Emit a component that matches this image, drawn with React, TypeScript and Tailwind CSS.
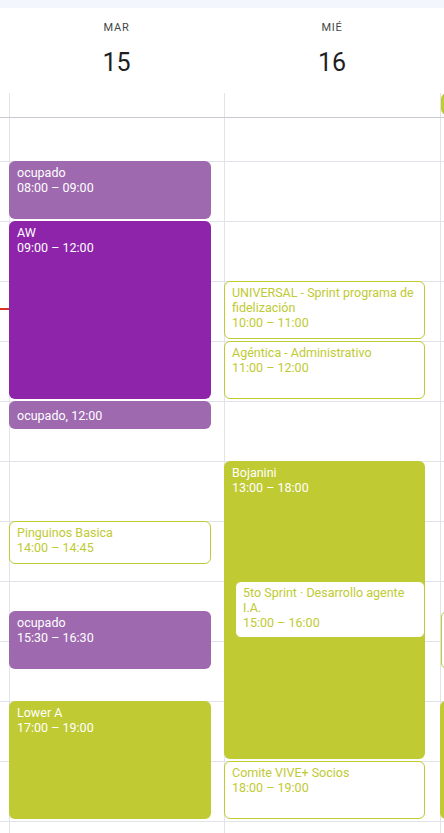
import React from "react";

type Ev = {
  top: number;
  height: number;
  left: number;
  width: number;
  kind: "grape" | "lav" | "green" | "outline";
  title: string;
  time?: string;
  inline?: boolean;
  z?: number;
};

const LINE = "border-[#e1e3ea]";

function HourLines() {
  return (
    <>
      <div className={`h-[44px] border-b ${LINE}`} />
      {Array.from({ length: 12 }).map((_, i) => (
        <div key={i} className={`h-[60px] border-b ${LINE}`} />
      ))}
    </>
  );
}

function Event({ e }: { e: Ev }) {
  const base =
    "absolute overflow-hidden rounded-[6px] text-[12.5px] leading-[15px]";
  let cls = "";
  if (e.kind === "grape") cls = "bg-[#8e24aa] text-white pl-[8px] pr-[4px] pt-[4px]";
  if (e.kind === "lav") cls = "bg-[#9e69af] text-white pl-[8px] pr-[4px] pt-[4px]";
  if (e.kind === "green") cls = "bg-[#c0ca33] text-white pl-[8px] pr-[4px] pt-[4px]";
  if (e.kind === "outline")
    cls = "bg-white border border-[#c0ca33] text-[#c0ca33] pl-[7px] pr-[3px] pt-[3px]";
  return (
    <div
      className={`${base} ${cls}`}
      style={{ top: e.top, height: e.height, left: e.left, width: e.width, zIndex: e.z ?? 1 }}
    >
      {e.inline ? (
        <div className="pt-[3px]">
          {e.title}, {e.time}
        </div>
      ) : (
        <>
          <div>{e.title}</div>
          {e.time && <div>{e.time}</div>}
        </>
      )}
    </div>
  );
}

const col1: Ev[] = [
  { top: 43, height: 58, left: -1, width: 202, kind: "lav", title: "ocupado", time: "08:00 – 09:00" },
  { top: 103, height: 178, left: -1, width: 202, kind: "grape", title: "AW", time: "09:00 – 12:00" },
  { top: 283, height: 28, left: -1, width: 202, kind: "lav", title: "ocupado", time: "12:00", inline: true },
  { top: 403, height: 43, left: -1, width: 202, kind: "outline", title: "Pinguinos Basica", time: "14:00 – 14:45" },
  { top: 493, height: 58, left: -1, width: 202, kind: "lav", title: "ocupado", time: "15:30 – 16:30" },
  { top: 583, height: 118, left: -1, width: 202, kind: "green", title: "Lower A", time: "17:00 – 19:00" },
];

const col2: Ev[] = [
  {
    top: 163,
    height: 58,
    left: -1,
    width: 201,
    kind: "outline",
    title: "UNIVERSAL - Sprint programa de fidelización",
    time: "10:00 – 11:00",
  },
  { top: 223, height: 58, left: -1, width: 201, kind: "outline", title: "Agéntica - Administrativo", time: "11:00 – 12:00" },
  { top: 343, height: 298, left: -1, width: 201, kind: "green", title: "Bojanini", time: "13:00 – 18:00" },
  {
    top: 463,
    height: 57,
    left: 10,
    width: 190,
    kind: "outline",
    title: "5to Sprint · Desarrollo agente I.A.",
    time: "15:00 – 16:00",
    z: 2,
  },
  { top: 643, height: 58, left: -1, width: 201, kind: "outline", title: "Comite VIVE+ Socios", time: "18:00 – 19:00" },
];

const col3: Ev[] = [
  { top: 493, height: 58, left: 0, width: 200, kind: "outline", title: "", time: "" },
  { top: 583, height: 118, left: -1, width: 201, kind: "green", title: "", time: "" },
];

export default function App() {
  return (
    <div
      className="w-[444px] h-[833px] overflow-hidden bg-white flex flex-col"
      style={{ fontFamily: "Roboto, 'Open Sans', Arial, sans-serif" }}
    >
      <div className="h-[8px] shrink-0 bg-[#f3f6fc]" />
      {/* Header */}
      <div className="h-[85px] shrink-0 flex">
        <div className="w-[9px] shrink-0" />
        <div className="w-[215px] shrink-0 flex flex-col items-center pt-[13px]">
          <div className="text-[11px] leading-[14px] tracking-[0.8px] text-[#444746]">MAR</div>
          <div className="mt-[13px] text-[25px] leading-[30px] text-[#1f1f1f]">15</div>
        </div>
        <div className="w-[216px] shrink-0 flex flex-col items-center pt-[13px]">
          <div className="text-[11px] leading-[14px] tracking-[0.8px] text-[#444746]">MIÉ</div>
          <div className="mt-[13px] text-[25px] leading-[30px] text-[#1f1f1f]">16</div>
        </div>
        <div className="flex-1" />
      </div>
      {/* All-day row */}
      <div className="h-[25px] shrink-0 flex border-b border-[#c8c9d2]">
        <div className="w-[9px] shrink-0" />
        <div className={`w-[215px] shrink-0 border-l ${LINE}`} />
        <div className={`w-[216px] shrink-0 border-l ${LINE}`} />
        <div className={`flex-1 border-l ${LINE}`}>
          <div className="h-[22px] w-[40px] rounded-l-[6px] bg-[#c0ca33]" />
        </div>
      </div>
      {/* Time grid */}
      <div className="flex flex-1 min-h-0">
        <div className="w-[9px] shrink-0 relative">
          <HourLines />
          <div className="absolute left-0 top-[190px] h-[2px] w-[9px] bg-[#d93025]" />
        </div>
        <div className={`w-[215px] shrink-0 relative border-l ${LINE}`}>
          <HourLines />
          {col1.map((e, i) => (
            <Event key={i} e={e} />
          ))}
        </div>
        <div className={`w-[216px] shrink-0 relative border-l ${LINE}`}>
          <HourLines />
          {col2.map((e, i) => (
            <Event key={i} e={e} />
          ))}
        </div>
        <div className={`flex-1 relative border-l ${LINE}`}>
          <HourLines />
          {col3.map((e, i) => (
            <Event key={i} e={e} />
          ))}
        </div>
      </div>
    </div>
  );
}
